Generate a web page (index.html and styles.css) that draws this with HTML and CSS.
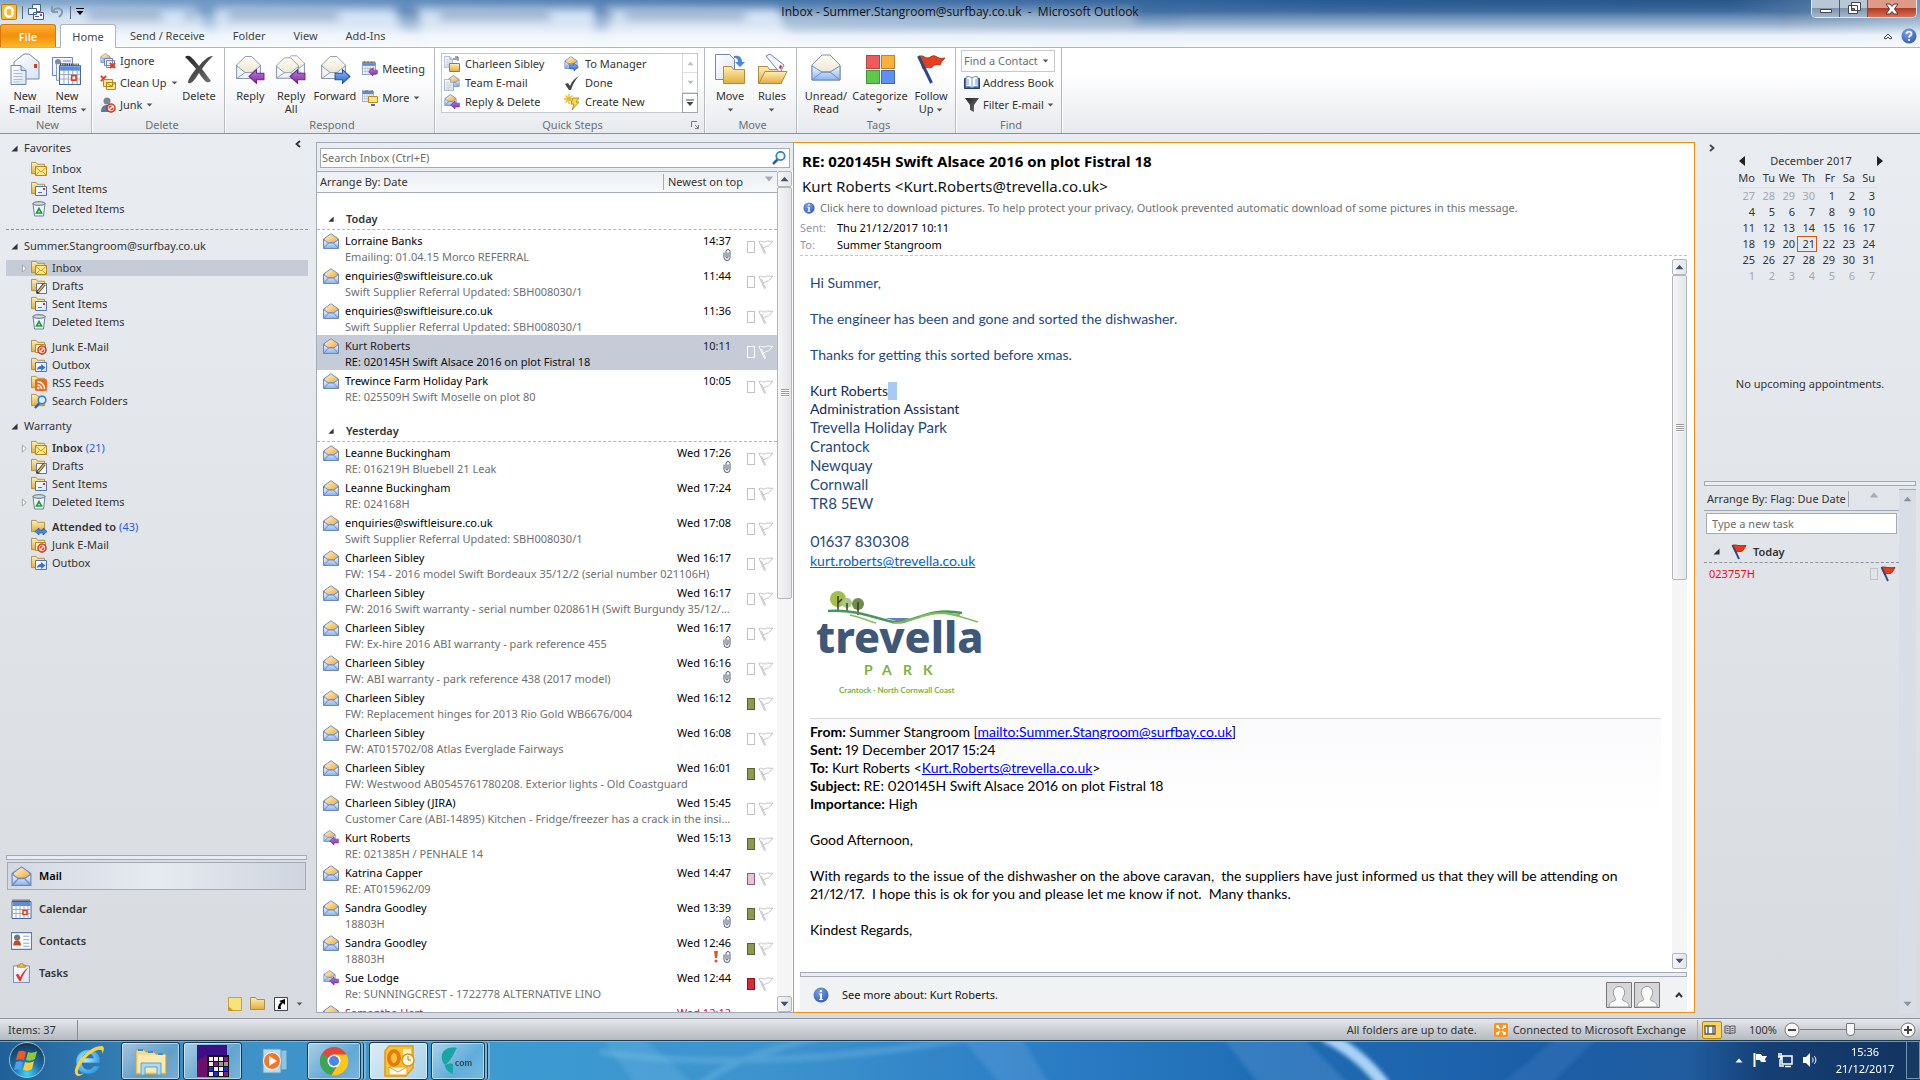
FILE: index.html
```html
<!DOCTYPE html>
<html lang="en">
<head>
<meta charset="utf-8">
<title>Inbox - Summer.Stangroom@surfbay.co.uk - Microsoft Outlook</title>
<link rel="stylesheet" href="styles.css">
</head>
<body>
<svg class="defs" width="0" height="0" aria-hidden="true">
<defs>
<linearGradient id="gPeach" x1="0" y1="0" x2="1" y2="1"><stop offset="0" stop-color="#fff3d0"/><stop offset="1" stop-color="#f6b03c"/></linearGradient>
<linearGradient id="gBlue" x1="0" y1="0" x2="0" y2="1"><stop offset="0" stop-color="#f4f9ff"/><stop offset="1" stop-color="#8db4ee"/></linearGradient>
<linearGradient id="gCream" x1="0" y1="0" x2="0" y2="1"><stop offset="0" stop-color="#fffdf4"/><stop offset="1" stop-color="#e6dfc6"/></linearGradient>
<linearGradient id="gPage" x1="0" y1="0" x2="1" y2="1"><stop offset="0" stop-color="#ffffff"/><stop offset="1" stop-color="#d9e3f3"/></linearGradient>
<linearGradient id="gFold" x1="0" y1="0" x2="0" y2="1"><stop offset="0" stop-color="#fff0b4"/><stop offset="1" stop-color="#e3ac3d"/></linearGradient>
<linearGradient id="gPurple" x1="0" y1="0" x2="0" y2="1"><stop offset="0" stop-color="#c47ae0"/><stop offset="1" stop-color="#7a2f9e"/></linearGradient>
<linearGradient id="gArrow" x1="0" y1="0" x2="0" y2="1"><stop offset="0" stop-color="#8fbcf8"/><stop offset="1" stop-color="#2c66c8"/></linearGradient>
<linearGradient id="gDark" x1="0" y1="0" x2="1" y2="1"><stop offset="0" stop-color="#222"/><stop offset="1" stop-color="#777"/></linearGradient>
<radialGradient id="gInfo" cx=".4" cy=".3" r=".8"><stop offset="0" stop-color="#7fa2e8"/><stop offset="1" stop-color="#2a55b8"/></radialGradient>
<radialGradient id="gOrb" cx=".5" cy=".9" r=".9"><stop offset="0" stop-color="#3fd4ff"/><stop offset=".45" stop-color="#1b6ea6"/><stop offset="1" stop-color="#16324f"/></radialGradient>
<radialGradient id="gIe" cx=".4" cy=".4" r=".7"><stop offset="0" stop-color="#b8ecff"/><stop offset="1" stop-color="#1c8fdc"/></radialGradient>
<linearGradient id="gTask" x1="0" y1="0" x2="1" y2="0"><stop offset="0" stop-color="#1f5f97"/><stop offset=".1" stop-color="#3f8fc4"/><stop offset=".25" stop-color="#3c9bd2"/><stop offset=".4" stop-color="#3d93cd"/><stop offset=".55" stop-color="#2a7cc4"/><stop offset=".66" stop-color="#1f6db5"/><stop offset=".8" stop-color="#1c5ea8"/><stop offset=".88" stop-color="#205c9e"/><stop offset=".92" stop-color="#153f74"/><stop offset="1" stop-color="#12335f"/></linearGradient>
<linearGradient id="gTitle" x1="0" y1="0" x2="1" y2="0"><stop offset="0" stop-color="#7fa4cb"/><stop offset=".2" stop-color="#5f8bbb"/><stop offset=".5" stop-color="#3d6da4"/><stop offset=".7" stop-color="#285a92"/><stop offset=".9" stop-color="#28568a"/><stop offset="1" stop-color="#6f93b8"/></linearGradient>
<linearGradient id="gFade" x1="0" y1="0" x2="0" y2="1"><stop offset="0" stop-color="#fff" stop-opacity="0"/><stop offset=".25" stop-color="#fff" stop-opacity=".08"/><stop offset=".5" stop-color="#e8f0f8" stop-opacity=".5"/><stop offset=".75" stop-color="#f2f7fd" stop-opacity=".95"/><stop offset="1" stop-color="#f7fafd"/></linearGradient>
<filter id="soft" x="-20%" y="-60%" width="140%" height="220%"><feGaussianBlur stdDeviation="5"/></filter>
<filter id="soft2" x="-20%" y="-60%" width="140%" height="220%"><feGaussianBlur stdDeviation="2"/></filter>
</defs>
<symbol id="mail" viewBox="0 0 16 16"><path d="M.5 6 8 .8 15.500 6V15.500H.5z" fill="#7f9fd6" stroke="#7088b8"/><path d="M2 5.500 8 1.200l6 4.300V9H2z" fill="url(#gPeach)"/><path d="M1 7l4.500 3h5L15 7v8H1z" fill="url(#gBlue)"/><path d="M1 15l4.500-5h5L15 15M1 7l4.500 3M15 7l-4.500 3" fill="none" stroke="#6c8cc8"/></symbol>
<symbol id="arrL" viewBox="0 0 16 16"><path d="M1 8 8 1.500V5h7v6H8v3.500z" fill="url(#gPurple)" stroke="#6a2a8c"/></symbol>
<symbol id="arrR" viewBox="0 0 16 16"><path d="M15 8 8 1.500V5H1v6h7v3.500z" fill="url(#gArrow)" stroke="#2452a0"/></symbol>
<symbol id="mailre" viewBox="0 0 16 16"><use href="#mail" width="13" height="12"/><use href="#arrL" x="6" y="6" width="10" height="10"/></symbol>
<symbol id="mailfw" viewBox="0 0 16 16"><use href="#mail" width="14" height="13"/><use href="#arrR" x="5" y="6" width="10" height="10"/></symbol>
<symbol id="fold" viewBox="0 0 16 16"><path d="M.5 1.500h5l1.500 2h7.500v10H.5z" fill="url(#gFold)" stroke="#a98e4e"/></symbol>
<symbol id="fin" viewBox="0 0 16 16"><use href="#fold" width="15" height="15"/><path d="M4.500 5.500h11v9h-11z" fill="#fde98a" stroke="#b58a1c"/><path d="M4.500 6l5.500 5 5.500-5M4.500 14.500l4-4M15.500 14.500l-4-4" fill="none" stroke="#c49a2c"/></symbol>
<symbol id="fsent" viewBox="0 0 16 16"><use href="#fold" width="15" height="15"/><path d="M4.500 5.500h11v9h-11z" fill="url(#gPage)" stroke="#5577ad"/><path d="M12 7h2v2h-2z" fill="#d33"/><path d="M7 11.500h4" stroke="#5577ad"/></symbol>
<symbol id="fdraft" viewBox="0 0 16 16"><use href="#fold" width="15" height="15"/><path d="M5.500 5.500h10v10h-10z" fill="#fff" stroke="#5577ad"/><path d="M6 15l7.500-9" stroke="#333" stroke-width="3"/><path d="M7 14l6.500-8" stroke="#f3b24b" stroke-width="1.500"/></symbol>
<symbol id="bin" viewBox="0 0 16 16"><path d="M2 2.500h12L12.500 15h-9z" fill="#eef4f8" stroke="#6d8296"/><ellipse cx="8" cy="2.500" rx="6" ry="1.800" fill="#cfdbe6" stroke="#5b6f82"/><path d="M8 7.500l2.500 4.500h-5z" fill="none" stroke="#1f9a3a" stroke-width="1.600"/></symbol>
<symbol id="no" viewBox="0 0 16 16"><circle cx="8" cy="8" r="7" fill="#e8401c" stroke="#a82a10"/><path d="M4.500 11.500l7-7" stroke="#fff" stroke-width="2.500"/><circle cx="8" cy="8" r="4.600" fill="none" stroke="#fff" stroke-width="1.200"/></symbol>
<symbol id="fjunk" viewBox="0 0 16 16"><use href="#fold" width="15" height="15"/><path d="M4.500 5.500h10v8h-10z" fill="#f6efcf" stroke="#b58a1c"/><use href="#no" x="6" y="6" width="10" height="10"/></symbol>
<symbol id="fout" viewBox="0 0 16 16"><use href="#fold" width="15" height="15"/><path d="M4.500 5.500h11v9h-11z" fill="url(#gPage)" stroke="#5577ad"/><path d="M6 13c0-3 2-4 4-4V7l4.500 3.500L10 14v-2c-2 0-3 0-4 1z" fill="#3a73d8"/></symbol>
<symbol id="frss" viewBox="0 0 16 16"><use href="#fold" width="15" height="15"/><rect x="4" y="4" width="12" height="12" rx="1.500" fill="#ee6a1e"/><g fill="none" stroke="#fff" stroke-width="1.500"><path d="M6.500 10a4 4 0 0 1 4 4M6.500 6.800a7 7 0 0 1 7 7.200"/></g><circle cx="7.300" cy="13" r="1.200" fill="#fff"/></symbol>
<symbol id="fsearch" viewBox="0 0 16 16"><use href="#fold" width="15" height="15"/><path d="M4 15l4.500-5" stroke="#2a5fb0" stroke-width="2.400"/><circle cx="11" cy="7" r="3.800" fill="#d9efff" stroke="#2f7fd0" stroke-width="1.600"/></symbol>
<symbol id="fatt" viewBox="0 0 16 16"><use href="#fold" width="15" height="15"/><path d="M4 12.500 8 9v2h4V9l4 3.500-4 3.500v-2H8v2z" fill="#4a86e4" stroke="#1f4fa8" stroke-width=".7"/></symbol>
<symbol id="flag" viewBox="0 0 16 16"><path d="M1.500 1.500c3-1.500 5 1 13.500 0l-3.500 5.500c-2.500 1-4 0-7 1.500z" fill="#ea3c1a" stroke="#a92a12"/><path d="M1.500 1l6.500 14" stroke="#2c4a84" stroke-width="1.800"/></symbol>
<symbol id="flago" viewBox="0 0 16 16"><path d="M1 2.500c2-1 3 .5 5 .5s3-1.500 5-1 2 .5 4 0L11.500 6c-1.500 2-2 .5-3.500 1.500S6 9 4.500 9M1 2.500l5.500 12 1-.5L3.500 5" fill="none" stroke="currentColor"/></symbol>
<symbol id="clip" viewBox="0 0 8 12"><path d="M1 3.500v5a3 3 0 0 0 6 0V2.500a1.700 1.700 0 0 0-4 0V8a1 1 0 0 0 2 0V3.500" fill="none" stroke="#4b586e"/></symbol>
<symbol id="tri" viewBox="0 0 8 8"><path d="M7.500.5v7h-7z" fill="#333"/></symbol>
<symbol id="exp" viewBox="0 0 8 10"><path d="M1.500 1l4.500 4-4.500 4z" fill="#fff" stroke="#999"/></symbol>
<symbol id="dn" viewBox="0 0 8 5"><path d="M.5.5h7L4 4.500z" fill="currentColor"/></symbol>
<symbol id="up" viewBox="0 0 8 5"><path d="M.5 4.500h7L4 .5z" fill="currentColor"/></symbol>
<symbol id="glass" viewBox="0 0 16 16"><path d="M2 14l5-5" stroke="#2a5fb0" stroke-width="2.500"/><circle cx="9.500" cy="6" r="4.200" fill="#f3fbff" stroke="#2e86cf" stroke-width="1.800"/></symbol>
<symbol id="info" viewBox="0 0 16 16"><circle cx="8" cy="8" r="7.500" fill="url(#gInfo)"/><path d="M7 3h2v2H7zM6 6.500h3V12h1v1H6v-1h1V7.500H6z" fill="#fff"/></symbol>
<symbol id="env" viewBox="0 0 32 32"><path d="M2 13 12 3h8l10 10v16H2z" fill="url(#gCream)" stroke="#7e8ea8"/><path d="M2 14l10 8h8l10-8v15H2z" fill="#f1f4f9"/><path d="M2 14l10 8M30 14l-10 8M2 29l10-7h8l10 7M2 13v16h28V13" fill="none" stroke="#7e8ea8"/></symbol>
<symbol id="page" viewBox="0 0 16 20"><path d="M.5.5h10l5 5v14H.5z" fill="url(#gPage)" stroke="#6f86ad"/><path d="M10.500.5v5h5" fill="#cddaf0" stroke="#6f86ad"/><path d="M3 8.500h9M3 11.500h9M3 14.500h9M3 17h6M3 5.500h5" stroke="#b2bccd"/></symbol>
<symbol id="cal" viewBox="0 0 20 20"><path d="M.5 2.500h19v17H.5z" fill="#fff" stroke="#4a69a0"/><path d="M1 3h18v4H1z" fill="#5c8ddc"/><path d="M1 1.500h18" stroke="#333" stroke-width="2" stroke-dasharray="1 1"/><path d="M4.500 7v12M8.500 7v12M12.500 7v12M16.500 7v12M1 10.500h18M1 14.500h18" stroke="#9aacc9"/><path d="M11.500 11.500h4v4h-4z" fill="#fff" stroke="#e0401c" stroke-width="1.500"/></symbol>
<symbol id="newmail" viewBox="0 0 32 32"><path d="M5 9 15 1h5l10 8v17H5z" fill="url(#gPage)" stroke="#6f86ad"/><path d="M25 11h3v4h-3z" fill="#d43c1c"/><use href="#page" x="1" y="12" width="17" height="20"/></symbol>
<symbol id="newitems" viewBox="0 0 32 32"><path d="M1.500 4.500h20v18h-20z" fill="url(#gPage)" stroke="#6f86ad"/><circle cx="7" cy="9" r="3" fill="#7a8aa8"/><path d="M12 8h8M12 11h8" stroke="#7a8aa8"/><use href="#page" x="5" y="10" width="14" height="18"/><use href="#cal" x="8" y="10" width="22" height="22"/></symbol>
<symbol id="xbig" viewBox="0 0 32 32"><path d="M2 4c4-3 6-1 14 9C20 8 25 3 30 3c-4 4-8 8-11 13 4 5 6 8 9 12-4 3-6 1-12-8-4 6-6 11-11 10 0-4 4-9 8-14C9 11 6 8 2 4z" fill="url(#gDark)"/></symbol>
<symbol id="reply" viewBox="0 0 32 32"><use href="#env" x="1" y="1" width="27" height="27"/><use href="#arrL" x="14" y="15" width="17" height="17"/></symbol>
<symbol id="replyall" viewBox="0 0 32 32"><use href="#env" x="7" y="0" width="24" height="25"/><use href="#env" x="0" y="2" width="25" height="26"/><use href="#arrL" x="14" y="15" width="17" height="17"/></symbol>
<symbol id="forward" viewBox="0 0 32 32"><use href="#env" x="1" y="1" width="27" height="27"/><use href="#arrR" x="15" y="15" width="17" height="17"/></symbol>
<symbol id="move" viewBox="0 0 32 32"><path d="M1.500 1.500h14l5 5v20h-19z" fill="url(#gPage)" stroke="#6f86ad"/><path d="M20 3c6-1 8 2 8 6h3l-5 5-5-5h3c0-3-1-4-4-4z" fill="#4a86e4"/><path d="M9.500 13.500h8l2 3h11v14h-21z" fill="url(#gFold)" stroke="#b58a3c"/></symbol>
<symbol id="rules" viewBox="0 0 32 32"><path d="M2.500 13.500h9l2 3h12v14h-23z" fill="url(#gFold)" stroke="#b58a3c"/><path d="M10 3l4-2 14 11-4 8z" fill="#f3f6fb" stroke="#6f86ad"/><path d="M24 12l2 1-1 3-2-1z" fill="#d22"/><path d="M3 30.500 9 18.500h22l-6 12z" fill="url(#gFold)" stroke="#b58a3c"/></symbol>
<symbol id="unread" viewBox="0 0 32 32"><path d="M2 12 12 2h8l10 10v15H2z" fill="url(#gCream)" stroke="#7e8ea8"/><path d="M2 13l10 6h8l10-6v14H2z" fill="url(#gBlue)" stroke="#6d8cbc"/><path d="M2 27l10-8h8l10 8" fill="none" stroke="#6d8cbc"/></symbol>
<symbol id="categ" viewBox="0 0 32 32"><path d="M2 2h14v14H2z" fill="#f15a5a"/><path d="M17 2h14v14H17z" fill="#fbb03c"/><path d="M2 17h14v14H2z" fill="#5cc94c"/><path d="M17 17h14v14H17z" fill="#5f8ef4"/><path d="M2.500 2.500h13v13h-13zM17.500 2.500h13v13h-13zM2.500 17.500h13v13h-13zM17.500 17.500h13v13h-13z" fill="none" stroke="#000" stroke-opacity=".25"/></symbol>
<symbol id="bigflag" viewBox="0 0 32 32"><path d="M4 4c3-3 5 1 9 1 3 0 3-3 7-2 4 2 5 3 10 2-3 3-4 4-5 7-5-1-6 0-8 2-3 2-6-1-9 2z" fill="#e8401c" stroke="#b22c10"/><path d="M3.500 3l13 27" stroke="#2c4a84" stroke-width="3"/></symbol>
<symbol id="stack" viewBox="0 0 16 16"><use href="#mail" width="11" height="10"/><path d="M4.500 5.500h8v7h-8zM6.500 7.500h8v7h-8z" fill="#eef2f8" stroke="#7088b8"/></symbol>
<symbol id="redx" viewBox="0 0 8 8"><path d="M1 1l6 6M7 1 1 7" stroke="#e03a1c" stroke-width="2"/></symbol>
<symbol id="ignore" viewBox="0 0 16 16"><use href="#stack" width="16" height="16"/><use href="#redx" x="9" y="9" width="7" height="7"/></symbol>
<symbol id="cleanup" viewBox="0 0 16 16"><use href="#redx" width="7" height="7"/><path d="M3.500 4.500h9v7h-9zM6.500 7.500h9v7h-9z" fill="#fbe58c" stroke="#b58a1c"/><path d="M6.500 7.500 11 11l4.500-3.500" fill="none" stroke="#b58a1c"/></symbol>
<symbol id="junk" viewBox="0 0 16 16"><circle cx="7" cy="4" r="3.500" fill="#7b8593"/><path d="M1 15c0-5 2-7 6-7s6 2 6 7z" fill="#5c78b0"/><use href="#no" x="6" y="6" width="10" height="10"/></symbol>
<symbol id="meeting" viewBox="0 0 16 16"><use href="#cal" width="14" height="14"/><use href="#arrL" x="6" y="6" width="10" height="10"/></symbol>
<symbol id="moreic" viewBox="0 0 16 16"><use href="#cal" width="12" height="12"/><path d="M6.500 6.500h9v6h-9z" fill="#fbe58c" stroke="#b58a1c"/><path d="M9 15h4" stroke="#3a73d8" stroke-width="2"/></symbol>
<symbol id="qmove" viewBox="0 0 16 16"><use href="#page" width="9" height="12"/><path d="M11 1h3v4M9 3h4" stroke="#2c4a84" fill="none"/><path d="M5.500 7.500h10v8h-10z" fill="url(#gFold)" stroke="#a57a1c"/></symbol>
<symbol id="team" viewBox="0 0 16 16"><use href="#mail" x="3" width="13" height="12"/><use href="#page" y="4" width="10" height="12"/></symbol>
<symbol id="check" viewBox="0 0 16 16"><path d="M1 9l3-1 2 3C8 6 11 3 15 1 11 5 9 9 7 15H5z" fill="#444"/></symbol>
<symbol id="bolt" viewBox="0 0 16 16"><path d="M5 0v10M0 5h10M1.500 1.500l7 7M8.500 1.500l-7 7" stroke="#e8b820" stroke-width="1.300"/><path d="M9 4h6l-3 4h3l-7 8 2-6H7z" fill="#ffd84c" stroke="#a97a10" stroke-width=".8"/></symbol>
<symbol id="book" viewBox="0 0 16 16"><path d="M.5 3.500h15v10H.5z" fill="#2f5fae" stroke="#1e4280"/><path d="M2 2c3-1 5 0 6 1 1-1 3-2 6-1v10c-3-1-5 0-6 1-1-1-3-2-6-1z" fill="#fff" stroke="#6f86ad"/><path d="M8 3v10M4 4v6M12 4v6" stroke="#6f9ad8"/></symbol>
<symbol id="funnel" viewBox="0 0 16 16"><path d="M1 1h14l-5 7v7l-4-2V8z" fill="url(#gDark)"/></symbol>
<symbol id="contacts" viewBox="0 0 24 20"><path d="M.5.5h23v19H.5z" fill="#fff" stroke="#5b7cae" stroke-width="1.500"/><circle cx="7" cy="6" r="3.500" fill="#777"/><path d="M2.500 15c0-4 2-6 4.500-6s4.500 2 4.500 6z" fill="#cc4a1e"/><path d="M14 4.500h7M14 8.500h7M14 12.500h7M14 16h7" stroke="#6d98dc"/></symbol>
<symbol id="tasks" viewBox="0 0 20 24"><path d="M.5 3.500h19v20H.5z" fill="url(#gPage)" stroke="#5b7cae"/><path d="M5 5V2.500h3c0-3 4-3 4 0h3V5z" fill="#f2c14e" stroke="#a57a1c"/><path d="M3 14l3-1 2.500 4C11 12 14 8 18 5.500 14 11 11 16 9 22H7.500z" fill="#e5352a"/></symbol>
<symbol id="person" viewBox="0 0 26 26"><path d="M.5.5h25v25H.5z" fill="#d4d6d9" stroke="#777"/><path d="M3 25c0-4 2-5 6-6.500 1-.5.5-2 0-3-3-4-2-11 4-11s7 7 4 11c-.5 1-1 2.500 0 3 4 1.500 6 2.500 6 6.500z" fill="#fafafa" stroke="#999"/></symbol>
</svg>

<div class="app">
<header class="top">
  <svg class="aero" viewBox="0 0 1920 47" preserveAspectRatio="none" aria-hidden="true">
    <rect width="1920" height="47" fill="url(#gTitle)"/>
    <g filter="url(#soft)"><path d="M-10 8h205l20 40H-20zM215 8h180l10 40H215zM415 8h180v40H425zM605 8h175l10 40H610z" fill="#c6daf0"/><path d="M1180 12h600v40h-600z" fill="#3a6a9e"/></g>
    <g filter="url(#soft)" fill="#44648c" opacity=".6"><path d="M88 13h74v8H88zM228 13h110v8H228zM440 13h110v8H440zM625 13h120v8H625z"/><circle cx="190" cy="17" r="5"/><circle cx="414" cy="17" r="6"/><circle cx="608" cy="17" r="6"/></g>
    <path d="M785 8h350v18H785z" fill="#fff" opacity=".3" filter="url(#soft)"/>
    <rect width="1920" height="47" fill="url(#gFade)"/>
  </svg>
  <div class="titlebar">
    <div class="qat">
      <svg width="16" height="16" viewBox="0 0 16 16"><rect x=".5" y=".5" width="15" height="15" rx="1" fill="#f8b92c" stroke="#b8780c"/><rect x="4.500" y="3.500" width="7" height="9" rx="3" fill="none" stroke="#fff" stroke-width="2.400"/></svg>
      <i class="bar"></i>
      <button aria-label="Send/Receive"><svg width="16" height="16" viewBox="0 0 16 16"><path d="M4.500.5h8v7h-8z" fill="#fff" stroke="#44618f"/><path d="M.5 4.500h8v6h-8zM5.500 8.500h10v7h-10z" fill="#f4f8ff" stroke="#44618f"/><path d="M12 10h2v2h-2z" fill="#d33"/><path d="M7 12.500h4" stroke="#44618f"/></svg></button>
      <button aria-label="Undo"><svg width="16" height="16" viewBox="0 0 16 16"><path d="M3 8V2M3 8h6M4 7c4-5 10-2 9 2-.5 2-2 3-3 4" fill="none" stroke="#8a98aa" stroke-width="2"/></svg></button>
      <i class="bar"></i>
      <button aria-label="Customize"><svg width="8" height="8" viewBox="0 0 8 8"><path d="M0 .5h8" stroke="#000"/><path d="M.5 3h7L4 7z"/></svg></button>
    </div>
    <h1>Inbox - Summer.Stangroom@surfbay.co.uk&nbsp; -&nbsp; Microsoft Outlook</h1>
    <div class="winbtns">
      <button aria-label="Minimize"><svg width="14" height="12" viewBox="0 0 14 12"><path d="M1.500 6.500h11v3h-11z" fill="#fff" stroke="#445"/></svg></button>
      <button aria-label="Restore"><svg width="14" height="13" viewBox="0 0 14 13"><path d="M4.500.5h9v8h-9zM1.500 3.500h9v8h-9z" fill="#fff" stroke="#445"/><path d="M4.500 6.500h3v2h-3z" fill="#889" stroke="#445"/></svg></button>
      <button class="x" aria-label="Close"><svg width="14" height="12" viewBox="0 0 14 12"><path d="M1 1h4l2 2.500L9 1h4L9.500 6l3.500 5H9L7 8.500 5 11H1l3.500-5z" fill="#fff" stroke="#533"/></svg></button>
    </div>
  </div>
  <nav class="tabs">
    <button class="file">File</button><button class="on">Home</button><button>Send / Receive</button><button>Folder</button><button>View</button><button>Add-Ins</button>
    <span class="help"><svg width="10" height="8" viewBox="0 0 10 8"><path d="M1 6l4-4 4 4-2 1-2-2-2 2z" fill="#fff" stroke="#444"/></svg>
    <svg width="16" height="16" viewBox="0 0 16 16"><circle cx="8" cy="8" r="7.500" fill="url(#gInfo)"/><path d="M5.500 6c0-3.500 5.500-3 5 0-.3 1.500-2.500 1.500-2.500 3.500M8 11v2" fill="none" stroke="#fff" stroke-width="1.800"/></svg></span>
  </nav>
</header>

<section class="ribbon">
  <div class="group g-new"><div class="tools">
    <button class="big"><svg><use href="#newmail"/></svg><span>New<br>E-mail</span></button>
    <button class="big"><svg><use href="#newitems"/></svg><span>New<br>Items <svg class="dd"><use href="#dn"/></svg></span></button></div><h2>New</h2></div>
  <div class="group g-del"><div class="tools">
    <div class="smalls"><button><svg><use href="#ignore"/></svg>Ignore</button><button><svg><use href="#cleanup"/></svg>Clean Up <svg class="dd"><use href="#dn"/></svg></button><button><svg><use href="#junk"/></svg>Junk <svg class="dd"><use href="#dn"/></svg></button></div>
    <button class="big"><svg><use href="#xbig"/></svg><span>Delete</span></button></div><h2>Delete</h2></div>
  <div class="group g-resp"><div class="tools">
    <button class="big"><svg><use href="#reply"/></svg><span>Reply</span></button>
    <button class="big"><svg><use href="#replyall"/></svg><span>Reply<br>All</span></button>
    <button class="big mid"><svg><use href="#forward"/></svg><span>Forward</span></button>
    <div class="smalls two"><button><svg><use href="#meeting"/></svg>Meeting</button><button><svg><use href="#moreic"/></svg>More <svg class="dd"><use href="#dn"/></svg></button></div></div><h2>Respond</h2></div>
  <div class="group g-quick"><div class="tools"><div class="gallery">
    <div class="steps"><button><svg><use href="#qmove"/></svg>Charleen Sibley</button><button><svg><use href="#mailfw"/></svg>To Manager</button><button><svg><use href="#team"/></svg>Team E-mail</button><button><svg><use href="#check"/></svg>Done</button><button><svg><use href="#mailre"/></svg>Reply &amp; Delete</button><button><svg><use href="#bolt"/></svg>Create New</button></div>
    <div class="spin"><button aria-label="Up"><svg><use href="#up"/></svg></button><button aria-label="Down"><svg><use href="#dn"/></svg></button><button class="live" aria-label="More steps"><svg viewBox="0 0 8 8"><path d="M0 1h8" stroke="#444"/><path d="M.5 3h7L4 7z" fill="#444"/></svg></button></div></div></div>
    <h2>Quick Steps<svg class="launch" width="8" height="8" viewBox="0 0 8 8"><path d="M.5 6V.5H6M4 4l3 3M7.500 4v3.500H4" fill="none" stroke="#777"/></svg></h2></div>
  <div class="group g-move"><div class="tools">
    <button class="big"><svg><use href="#move"/></svg><span>Move<br><svg class="dd"><use href="#dn"/></svg></span></button>
    <button class="big"><svg><use href="#rules"/></svg><span>Rules<br><svg class="dd"><use href="#dn"/></svg></span></button></div><h2>Move</h2></div>
  <div class="group g-tags"><div class="tools">
    <button class="big mid"><svg><use href="#unread"/></svg><span>Unread/<br>Read</span></button>
    <button class="big wide"><svg><use href="#categ"/></svg><span>Categorize<br><svg class="dd"><use href="#dn"/></svg></span></button>
    <button class="big"><svg><use href="#bigflag"/></svg><span>Follow<br>Up <svg class="dd"><use href="#dn"/></svg></span></button></div><h2>Tags</h2></div>
  <div class="group g-find"><div class="tools"><div class="smalls">
    <div class="find"><input type="text" placeholder="Find a Contact" aria-label="Find a Contact"><svg class="dd"><use href="#dn"/></svg></div>
    <button><svg><use href="#book"/></svg>Address Book</button><button><svg><use href="#funnel"/></svg>Filter E-mail <svg class="dd"><use href="#dn"/></svg></button></div></div><h2>Find</h2></div>
</section>

<main class="work">
<aside class="nav">
  <button class="fold" aria-label="Minimize pane"><svg width="6" height="8" viewBox="0 0 6 8"><path d="M5 1 1.500 4 5 7" fill="none" stroke="#333" stroke-width="1.800"/></svg></button>
  <h3><svg><use href="#tri"/></svg>Favorites</h3>
  <ul class="fav"><li><svg><use href="#fin"/></svg>Inbox</li><li><svg><use href="#fsent"/></svg>Sent Items</li><li><svg><use href="#bin"/></svg>Deleted Items</li></ul>
  <hr>
  <h3><svg><use href="#tri"/></svg>Summer.Stangroom@surfbay.co.uk</h3>
  <ul><li class="sel"><svg class="ex"><use href="#exp"/></svg><svg><use href="#fin"/></svg>Inbox</li><li><svg><use href="#fdraft"/></svg>Drafts</li><li><svg><use href="#fsent"/></svg>Sent Items</li><li><svg><use href="#bin"/></svg>Deleted Items</li></ul>
  <ul class="more"><li><svg><use href="#fjunk"/></svg>Junk E-Mail</li><li><svg><use href="#fout"/></svg>Outbox</li><li><svg><use href="#frss"/></svg>RSS Feeds</li><li><svg><use href="#fsearch"/></svg>Search Folders</li></ul>
  <h3><svg><use href="#tri"/></svg>Warranty</h3>
  <ul><li><svg class="ex"><use href="#exp"/></svg><svg><use href="#fin"/></svg><b>Inbox</b><em>(21)</em></li><li><svg><use href="#fdraft"/></svg>Drafts</li><li><svg><use href="#fsent"/></svg>Sent Items</li><li><svg class="ex"><use href="#exp"/></svg><svg><use href="#bin"/></svg>Deleted Items</li></ul>
  <ul class="more"><li><svg><use href="#fatt"/></svg><b>Attended to</b><em>(43)</em></li><li><svg><use href="#fjunk"/></svg>Junk E-Mail</li><li><svg><use href="#fout"/></svg>Outbox</li></ul>
  <div class="modules">
    <div class="split"></div>
    <button class="on"><svg><use href="#mail"/></svg>Mail</button>
    <button><svg><use href="#cal"/></svg>Calendar</button>
    <button><svg><use href="#contacts"/></svg>Contacts</button>
    <button><svg><use href="#tasks"/></svg>Tasks</button>
    <div class="tiny"><svg width="14" height="14" viewBox="0 0 14 14"><path d="M.5.5h13v13H.5z" fill="#f9e27a" stroke="#c9a23a"/><path d="M0 14V9l6 5z" fill="#c9982a"/></svg><svg width="16" height="16"><use href="#fold"/></svg><svg width="14" height="14" viewBox="0 0 14 14"><path d="M.5.5h13v13H.5z" fill="#fff" stroke="#445"/><path d="M4 12c0-4 1-5 3-7L5 4l6-2v6L9 6c-2 2-3 3-2 6z"/></svg><svg class="dd"><use href="#dn"/></svg></div>
  </div>
</aside>

<section class="list">
  <div class="search"><input type="text" placeholder="Search Inbox (Ctrl+E)" aria-label="Search Inbox"><svg width="16" height="16"><use href="#glass"/></svg></div>
  <div class="body">
  <div class="col">
  <div class="arrange"><span>Arrange By: Date</span><span class="newest">Newest on top</span><svg width="10" height="6"><use href="#dn"/></svg></div>
  <div class="msgs">
  <h3><svg><use href="#tri"/></svg>Today</h3>
  <ul>
  <li><svg class="ic"><use href="#mail"/></svg><b>Lorraine Banks</b><time>14:37</time><p>Emailing: 01.04.15 Morco REFERRAL</p><span class="at"><svg><use href="#clip"/></svg></span><span class="fl"><i></i><svg><use href="#flago"/></svg></span></li>
  <li><svg class="ic"><use href="#mail"/></svg><b>enquiries@swiftleisure.co.uk</b><time>11:44</time><p>Swift Supplier Referral Updated: SBH008030/1</p><span class="fl"><i></i><svg><use href="#flago"/></svg></span></li>
  <li><svg class="ic"><use href="#mail"/></svg><b>enquiries@swiftleisure.co.uk</b><time>11:36</time><p>Swift Supplier Referral Updated: SBH008030/1</p><span class="fl"><i></i><svg><use href="#flago"/></svg></span></li>
  <li class="sel"><svg class="ic"><use href="#mail"/></svg><b>Kurt Roberts</b><time>10:11</time><p>RE: 020145H Swift Alsace 2016 on plot Fistral 18</p><span class="fl"><i></i><svg><use href="#flago"/></svg></span></li>
  <li><svg class="ic"><use href="#mail"/></svg><b>Trewince Farm Holiday Park</b><time>10:05</time><p>RE: 025509H Swift Moselle on plot 80</p><span class="fl"><i></i><svg><use href="#flago"/></svg></span></li>
  </ul>
  <h3><svg><use href="#tri"/></svg>Yesterday</h3>
  <ul>
  <li><svg class="ic"><use href="#mail"/></svg><b>Leanne Buckingham</b><time>Wed 17:26</time><p>RE: 016219H Bluebell 21 Leak</p><span class="at"><svg><use href="#clip"/></svg></span><span class="fl"><i></i><svg><use href="#flago"/></svg></span></li>
  <li><svg class="ic"><use href="#mail"/></svg><b>Leanne Buckingham</b><time>Wed 17:24</time><p>RE: 024168H</p><span class="fl"><i></i><svg><use href="#flago"/></svg></span></li>
  <li><svg class="ic"><use href="#mail"/></svg><b>enquiries@swiftleisure.co.uk</b><time>Wed 17:08</time><p>Swift Supplier Referral Updated: SBH008030/1</p><span class="fl"><i></i><svg><use href="#flago"/></svg></span></li>
  <li><svg class="ic"><use href="#mail"/></svg><b>Charleen Sibley</b><time>Wed 16:17</time><p>FW: 154 - 2016 model Swift Bordeaux 35/12/2 (serial number 021106H)</p><span class="fl"><i></i><svg><use href="#flago"/></svg></span></li>
  <li><svg class="ic"><use href="#mail"/></svg><b>Charleen Sibley</b><time>Wed 16:17</time><p>FW: 2016 Swift warranty - serial number 020861H (Swift Burgundy 35/12/...</p><span class="fl"><i></i><svg><use href="#flago"/></svg></span></li>
  <li><svg class="ic"><use href="#mail"/></svg><b>Charleen Sibley</b><time>Wed 16:17</time><p>FW: Ex-hire 2016 ABI warranty - park reference 455</p><span class="at"><svg><use href="#clip"/></svg></span><span class="fl"><i></i><svg><use href="#flago"/></svg></span></li>
  <li><svg class="ic"><use href="#mail"/></svg><b>Charleen Sibley</b><time>Wed 16:16</time><p>FW: ABI warranty - park reference 438 (2017 model)</p><span class="at"><svg><use href="#clip"/></svg></span><span class="fl"><i></i><svg><use href="#flago"/></svg></span></li>
  <li><svg class="ic"><use href="#mail"/></svg><b>Charleen Sibley</b><time>Wed 16:12</time><p>FW: Replacement hinges for 2013 Rio Gold WB6676/004</p><span class="fl"><i class="green"></i><svg><use href="#flago"/></svg></span></li>
  <li><svg class="ic"><use href="#mail"/></svg><b>Charleen Sibley</b><time>Wed 16:08</time><p>FW: AT015702/08 Atlas Everglade Fairways</p><span class="fl"><i></i><svg><use href="#flago"/></svg></span></li>
  <li><svg class="ic"><use href="#mail"/></svg><b>Charleen Sibley</b><time>Wed 16:01</time><p>FW: Westwood AB0545761780208. Exterior lights - Old Coastguard</p><span class="fl"><i class="green"></i><svg><use href="#flago"/></svg></span></li>
  <li><svg class="ic"><use href="#mail"/></svg><b>Charleen Sibley (JIRA)</b><time>Wed 15:45</time><p>Customer Care (ABI-14895) Kitchen - Fridge/freezer has a crack in the insi...</p><span class="fl"><i></i><svg><use href="#flago"/></svg></span></li>
  <li><svg class="ic"><use href="#mailre"/></svg><b>Kurt Roberts</b><time>Wed 15:13</time><p>RE: 021385H / PENHALE 14</p><span class="fl"><i class="green"></i><svg><use href="#flago"/></svg></span></li>
  <li><svg class="ic"><use href="#mail"/></svg><b>Katrina Capper</b><time>Wed 14:47</time><p>RE: AT015962/09</p><span class="fl"><i class="pink"></i><svg><use href="#flago"/></svg></span></li>
  <li><svg class="ic"><use href="#mail"/></svg><b>Sandra Goodley</b><time>Wed 13:39</time><p>18803H</p><span class="at"><svg><use href="#clip"/></svg></span><span class="fl"><i class="green"></i><svg><use href="#flago"/></svg></span></li>
  <li><svg class="ic"><use href="#mail"/></svg><b>Sandra Goodley</b><time>Wed 12:46</time><p>18803H</p><span class="at"><svg viewBox="0 0 8 12"><path d="M2 0h4L5 7H3z" fill="#e8502a"/><circle cx="4" cy="10" r="1.500" fill="#e8502a"/></svg><svg><use href="#clip"/></svg></span><span class="fl"><i class="green"></i><svg><use href="#flago"/></svg></span></li>
  <li><svg class="ic"><use href="#mailre"/></svg><b>Sue Lodge</b><time>Wed 12:44</time><p>Re: SUNNINGCREST - 1722778 ALTERNATIVE LINO</p><span class="fl"><i class="red"></i><svg><use href="#flago"/></svg></span></li>
  <li class="late"><svg class="ic"><use href="#mail"/></svg><b>Samantha Hart</b><time>Wed 12:12</time><p></p></li>
  </ul>
  </div></div>
  <div class="sb"><button aria-label="Scroll up"><svg><use href="#up"/></svg></button><div class="thumb t1"></div><div class="rest"></div><button aria-label="Scroll down"><svg><use href="#dn"/></svg></button></div>
  </div>
</section>

<article class="read">
  <header>
    <h2>RE: 020145H Swift Alsace 2016 on plot Fistral 18</h2>
    <p class="from">Kurt Roberts &lt;Kurt.Roberts@trevella.co.uk&gt;</p>
    <p class="note"><svg width="12" height="12"><use href="#info"/></svg>Click here to download pictures. To help protect your privacy, Outlook prevented automatic download of some pictures in this message.</p>
    <dl><dt>Sent:</dt><dd>Thu 21/12/2017 10:11</dd><dt>To:</dt><dd>Summer Stangroom</dd></dl>
  </header>
  <div class="view">
    <div class="text">
      <div class="blue"><p>Hi Summer,</p><p>The engineer has been and gone and sorted the dishwasher.</p><p>Thanks for getting this sorted before xmas.</p>
      <div class="navy">Kurt Roberts<mark></mark><br>Administration Assistant</div>
      <address>Trevella Holiday Park<br>Crantock<br>Newquay<br>Cornwall<br>TR8 5EW<br><br>01637 830308<br><a href="mailto:kurt.roberts@trevella.co.uk">kurt.roberts@trevella.co.uk</a></address></div>
      <svg class="logo" width="176" height="115" viewBox="0 0 176 115" role="img" aria-label="Trevella Park">
        <circle cx="28" cy="11" r="8" fill="#a5bf4a"/><circle cx="37" cy="15" r="5" fill="#a9c98c"/><circle cx="48" cy="16" r="6" fill="#6d8b4a"/><path d="M28 24V8M28 15l4-4M37 23v-8M48 27V14" stroke="#3b3a24" stroke-width="1.500"/>
        <path d="M75 30h25l-10 4z" fill="#6c7fb4"/><path d="M18 23c30-2 48 8 66 11s32-16 68-9" fill="none" stroke="#43985c" stroke-width="2.500"/><path d="M82 35c22 0 35-15 68-8M40 27c14 3 18 6 26 8M108 30c18-10 36-3 60 4" fill="none" stroke="#86bd5a" stroke-width="1.500"/>
        <text x="6" y="65" class="lg1">trevella</text><text x="54 72 93 113" y="87" class="lg2">PARK</text><text x="29" y="105" class="lg3">Crantock · North Cornwall Coast</text>
      </svg>
      <div class="quoted"><b>From:</b> Summer Stangroom [<a href="mailto:Summer.Stangroom@surfbay.co.uk">mailto:Summer.Stangroom@surfbay.co.uk</a>]<br><b>Sent:</b> 19 December 2017 15:24<br><b>To:</b> Kurt Roberts &lt;<a href="mailto:Kurt.Roberts@trevella.co.uk">Kurt.Roberts@trevella.co.uk</a>&gt;<br><b>Subject:</b> RE: 020145H Swift Alsace 2016 on plot Fistral 18<br><b>Importance:</b> High
      <p>Good Afternoon,</p><p>With regards to the issue of the dishwasher on the above caravan,&nbsp; the suppliers have just informed us that they will be attending on<br>21/12/17.&nbsp; I hope this is ok for you and please let me know if not.&nbsp; Many thanks.</p><p>Kindest Regards,</p></div>
    </div>
    <div class="sb"><button aria-label="Scroll up"><svg><use href="#up"/></svg></button><div class="thumb t2"></div><div class="rest"></div><button aria-label="Scroll down"><svg><use href="#dn"/></svg></button></div>
  </div>
  <footer><div class="split"></div><div class="people"><svg width="16" height="16"><use href="#info"/></svg><span>See more about: Kurt Roberts.</span><svg class="face" width="26" height="26"><use href="#person"/></svg><svg width="26" height="26"><use href="#person"/></svg><svg class="caret" width="8" height="6" viewBox="0 0 8 6"><path d="M1 5l3-3.500L7 5" fill="none" stroke="#333" stroke-width="2"/></svg></div></footer>
</article>

<aside class="todo">
  <button class="fold" aria-label="Minimize pane"><svg width="6" height="8" viewBox="0 0 6 8"><path d="M1 1l3.500 3L1 7" fill="none" stroke="#444" stroke-width="1.800"/></svg></button>
  <div class="month"><svg width="6" height="10" viewBox="0 0 6 10"><path d="M6 0v10L0 5z" fill="#222"/></svg><span>December 2017</span><svg width="6" height="10" viewBox="0 0 6 10"><path d="M0 0v10l6-5z" fill="#222"/></svg></div>
  <table>
  <thead><tr><th>Mo</th><th>Tu</th><th>We</th><th>Th</th><th>Fr</th><th>Sa</th><th>Su</th></tr></thead>
  <tbody>
  <tr><td class="o">27</td><td class="o">28</td><td class="o">29</td><td class="o">30</td><td>1</td><td>2</td><td>3</td></tr>
  <tr><td>4</td><td>5</td><td>6</td><td>7</td><td>8</td><td>9</td><td>10</td></tr>
  <tr><td>11</td><td>12</td><td>13</td><td>14</td><td>15</td><td>16</td><td>17</td></tr>
  <tr><td>18</td><td>19</td><td>20</td><td class="now">21</td><td>22</td><td>23</td><td>24</td></tr>
  <tr><td>25</td><td>26</td><td>27</td><td>28</td><td>29</td><td>30</td><td>31</td></tr>
  <tr class="o"><td>1</td><td>2</td><td>3</td><td>4</td><td>5</td><td>6</td><td>7</td></tr>
  </tbody></table>
  <p class="none">No upcoming appointments.</p>
  <div class="split"></div>
  <div class="taskpane"><div class="tcol">
    <div class="thead"><span>Arrange By: Flag: Due Date</span><svg width="10" height="6"><use href="#up"/></svg></div>
    <input type="text" placeholder="Type a new task" aria-label="Type a new task">
    <h3><svg class="t"><use href="#tri"/></svg><svg width="16" height="16"><use href="#flag"/></svg>Today</h3>
    <div class="task"><span>023757H</span><i></i><svg width="16" height="16"><use href="#flag"/></svg></div>
  </div><div class="ghost"><svg><use href="#up"/></svg><svg><use href="#dn"/></svg></div></div>
</aside>
</main>

<footer class="status">
  <span class="items">Items: 37</span>
  <span class="sync">All folders are up to date.</span>
  <svg width="14" height="14" viewBox="0 0 14 14"><rect width="14" height="14" rx="2" fill="#f7941d"/><path d="M3 3l3 3M11 3 8 6M3 11l3-3M11 11 8 8M3 5V3h2M9 3h2v2M3 9v2h2M9 11h2V9" fill="none" stroke="#fff" stroke-width="1.500"/></svg>
  <span class="conn">Connected to Microsoft Exchange</span>
  <button class="vw on" aria-label="Normal"><svg width="12" height="10" viewBox="0 0 12 10"><path d="M1 1h10v8H1zM4 1v8M9 1v8" fill="#fff" stroke="#555" stroke-width="1.300"/></svg></button>
  <button class="vw" aria-label="Reading"><svg width="12" height="10" viewBox="0 0 12 10"><path d="M1 1h4l1 1 1-1h4v7H7L6 9 5 8H1zM6 2v7M2.500 3.500h2M2.500 5.500h2M7.500 3.500h2M7.500 5.500h2" fill="none" stroke="#555"/></svg></button>
  <label for="zoom">100%</label>
  <svg width="16" height="16" viewBox="0 0 16 16"><circle cx="8" cy="8" r="7" fill="#f7f7f8" stroke="#777"/><path d="M4 8h8" stroke="#444" stroke-width="2"/></svg>
  <input id="zoom" type="range" min="0" max="100" value="50">
  <svg width="16" height="16" viewBox="0 0 16 16"><circle cx="8" cy="8" r="7" fill="#f7f7f8" stroke="#777"/><path d="M4 8h8M8 4v8" stroke="#444" stroke-width="2"/></svg>
</footer>

<footer class="taskbar">
  <svg class="aero" viewBox="0 0 1920 40" preserveAspectRatio="none" aria-hidden="true"><rect width="1920" height="40" fill="url(#gTask)"/><g filter="url(#soft2)"><path d="M1325-4c25 12 45 30 60 50" stroke="#a9d2f6" stroke-width="12" fill="none"/><path d="M600-5l35 50h60L640-5z" fill="#7cc0e6" opacity=".25"/><path d="M700 45c30-25 80-40 150-55M600 12c100 15 250 10 400-20" stroke="#8fd0f4" stroke-width="7" fill="none" opacity=".25"/><path d="M960-5l40 50h50l-30-50zM1220-5l40 50h90l-50-50z" fill="#8fc0ea" opacity=".2"/><path d="M1500 45l60-50h40l-50 50z" fill="#4a86c8" opacity=".3"/></g><path d="M0 .5h1920" stroke="#1b3d55"/><path d="M0 1.500h1920" stroke="#8fc4e0" stroke-opacity=".7"/></svg>
  <button class="start" aria-label="Start"><svg width="38" height="38" viewBox="0 0 38 38"><circle cx="19" cy="19" r="17.500" fill="url(#gOrb)" stroke="#9fc0d4"/><path d="M10 11c3-2 5-1 8 0l-2 8c-3-1-5-1-8 0z" fill="#f0582a"/><path d="M20 11c3 1 6 1 9-1l-2 8c-3 2-6 2-9 1z" fill="#8fc93a"/><path d="M8 21c3-1 5-1 7 0l-2 8c-2-1-4-1-7 0z" fill="#4aa3e8"/><path d="M17 21c3 1 6 1 9-1l-2 8c-3 2-6 2-9 1z" fill="#fbcb3c"/></svg></button>
  <button class="tb flat" aria-label="Internet Explorer"><svg width="32" height="34" viewBox="0 0 32 34"><path d="M27 19H9c0 7 9 9 12 3h6c-4 12-24 11-24-4S25 1 27 15zM9.500 14h11c-1-6-10-6-11 0z" fill="url(#gIe)" stroke="#1f7fc4" stroke-width=".6"/><path d="M3 31C-3 24 16 1 29 2c3 1 2 5 0 8 1-4-1-5-4-4C16 8 4 22 5 29c1 2 4 1 6 0-3 3-6 4-8 2z" fill="#fbd23c"/></svg></button>
  <button class="tb" aria-label="Explorer"><svg width="34" height="30" viewBox="0 0 34 30"><path d="M2 4h8l2 2h8l2 2h10v20H2z" fill="#f6dc8a" stroke="#c9a040"/><path d="M4 9h27v17H4z" fill="#fbeab0"/><path d="M4 4h5M14 6h5M24 8h5" stroke="#3a8fd0" stroke-width="2"/><path d="M7 29V17h20v12h-4v-8H11v8z" fill="#a9daf2" stroke="#5aa3cc"/></svg></button>
  <button class="tb" aria-label="Application"><svg width="32" height="32" viewBox="0 0 32 32"><path d="M0 0h30v12H10v20H0z" fill="#3c0f88"/><path d="M0 16l10-6v22H0z" fill="#6c106c"/><path d="M10 10h22v22H10z" fill="#111"/><g fill="#eee"><path d="M12 12h4v4h-4zM17 12h4v4h-4zM22 12h4v4h-4zM12 17h4v4h-4zM22 22h4v4h-4zM17 22h4v4h-4zM12 27h4v4h-4zM22 27h4v4h-4z"/></g><path d="M27 12h4v4h-4zM17 17h4v4h-4zM27 27h4v4h-4z" fill="#8c1c7c"/><path d="M12 22h4v4h-4zM27 22h4v4h-4zM17 27h4v4h-4z" fill="#1c2ce0"/><path d="M22 17h4v4h-4zM27 17h4v4h-4z" fill="#999"/></svg></button>
  <button class="tb flat" aria-label="Media Player"><svg width="28" height="26" viewBox="0 0 28 26"><path d="M8 2h18v20H8z" fill="#8cc4e4" stroke="#4a8ab4"/><path d="M2 1h18v24H2z" fill="#b9dcf0" stroke="#5a9ac4"/><circle cx="11" cy="13" r="8.500" fill="#f0782a" stroke="#fff"/><path d="M8 8l8 5-8 5z" fill="#fff"/></svg></button>
  <button class="tb stacked" aria-label="Chrome"><svg width="30" height="30" viewBox="0 0 30 30"><circle cx="15" cy="15" r="14" fill="#e5453a"/><path d="M15 15 3 8a14 14 0 0 0 9 21l7-12z" fill="#3aa757"/><path d="M15 8.500h12.500A14 14 0 0 1 12.500 29L20 17z" fill="#fbc818"/><circle cx="15" cy="15" r="6.500" fill="#fff"/><circle cx="15" cy="15" r="5" fill="#4a86ee"/></svg></button>
  <button class="tb lit" aria-label="Outlook"><svg width="32" height="32" viewBox="0 0 32 32"><path d="M6 1h24v22l-7 8H2V6z" fill="#fbc23a" stroke="#e09a14" stroke-width="1.500"/><path d="M20 4h8v8h-8z" fill="#fff3cc"/><ellipse cx="11" cy="13" rx="5" ry="7" fill="none" stroke="#e07f10" stroke-width="4"/><circle cx="25" cy="15" r="6" fill="#fff6da" stroke="#d8941c" stroke-width="1.500"/><path d="M25 11v4h3" fill="none" stroke="#b8780c"/><path d="M6 22h18v8H6z" fill="#fffaf0" stroke="#e8a21c"/><path d="M6 22l9 5 9-5" fill="none" stroke="#e8a21c"/></svg></button>
  <button class="tb stacked" aria-label="8com"><svg width="34" height="30" viewBox="0 0 34 30"><path d="M16 2C1-1-3 12 4 19c5-3 8-10 12-17z" fill="#1aa5a5"/><path d="M4 19c3-1 6-2 8-1v10c-5-2-8-5-8-9z" fill="#1aa5a5"/><text x="14" y="20" class="com">com</text></svg></button>
  <div class="tray"><svg width="8" height="5"><use href="#up"/></svg>
  <svg width="16" height="16" viewBox="0 0 16 16"><path d="M2.500 1v14" stroke="#fff" stroke-width="2"/><path d="M4 2h5l1 2h5l-2 3 1 3H9L8 8H4z" fill="#fff"/></svg>
  <svg width="16" height="16" viewBox="0 0 16 16"><path d="M5 4h10v8H5zM8 14.500h6M2 1v4M4 1v4M1 5h4l-2 3v6h4" fill="none" stroke="#fff" stroke-width="1.500"/></svg>
  <svg width="16" height="16" viewBox="0 0 16 16"><path d="M1 5h3l4-4v14l-4-4H1z" fill="#fff"/><path d="M10 5.500c1.500 1.500 1.500 3.500 0 5M12 4c2.500 2 2.500 6 0 8" fill="none" stroke="#fff"/></svg>
  <div class="clock">15:36<br>21/12/2017</div></div>
  <button class="desk" aria-label="Show desktop"></button>
</footer>
</div>
</body>
</html>
```

FILE: styles.css
```css
* { box-sizing: border-box; }
body { margin: 0; font: 11px/16px "Noto Sans", "Open Sans", sans-serif; color: #333; }
h1, h2, h3, p, ul, dl, dd { margin: 0; padding: 0; font-size: inherit; font-weight: normal; }
ul { list-style: none; }
button { font: inherit; color: inherit; background: none; border: 0; padding: 0; margin: 0; }
input { font: inherit; border-radius: 0; }
svg { display: block; flex: none; }
.defs { position: absolute; }
.app { height: 100vh; display: flex; flex-direction: column; overflow: hidden; }
.aero { position: absolute; inset: 0; width: 100%; height: 100%; z-index: -1; }
.dd { display: inline-block; width: 7px; height: 4px; color: #555; vertical-align: middle; }

/* title bar and tabs */
.top { position: relative; z-index: 0; flex: none; border-bottom: 1px solid #b1b5bb; }
.titlebar { display: grid; grid-template-columns: 1fr auto 1fr; height: 24px; }
.titlebar h1 { font: 12px/24px "Open Sans", sans-serif; color: #111; }
.qat { display: flex; align-items: center; gap: 5px; padding-left: 1px; }
.qat .bar { width: 1px; height: 13px; background: #5f6c7c; }
.winbtns { display: flex; justify-self: end; height: 18px; margin-right: 3px; border: 1px solid #e4ecf4; border-top: 0; border-radius: 0 0 5px 5px; overflow: hidden; }
.winbtns button { width: 28px; display: grid; place-items: center; background: linear-gradient(#b8c6d6 45%, #7f94ac 50%, #a5b8cc); border-right: 1px solid #4a5a70; }
.winbtns .x { width: 48px; border: 0; background: linear-gradient(#dd9a88 45%, #b53a20 50%, #d8705a); }
.tabs { display: flex; height: 23px; line-height: 23px; }
.tabs button { padding: 0 14px; color: #444; }
.tabs .file { width: 56px; margin-right: 4px; color: #fff; font-weight: 600; background: linear-gradient(#fbb034, #f58e0b 50%, #fcb92c); border: 1px solid #d8760c; border-bottom: 0; border-radius: 3px 3px 0 0; }
.tabs .on { width: 56px; padding: 0; margin-bottom: -1px; background: #fff; border: 1px solid #b1b5bb; border-bottom: 0; border-radius: 3px 3px 0 0; }
.help { margin-left: auto; display: flex; align-items: center; gap: 8px; padding-right: 3px; }

/* ribbon */
.ribbon { flex: none; display: flex; height: 86px; background: linear-gradient(#fff 30%, #e6e9ed); border-bottom: 1px solid #8b9097; }
.group { display: flex; flex-direction: column; border-right: 1px solid #b5bac1; box-shadow: 1px 0 #fff; }
.group .tools { display: flex; flex: 1; }
.group h2 { position: relative; height: 17px; line-height: 17px; text-align: center; color: #6a7078; }
.launch { position: absolute; right: 5px; top: 5px; }
.g-new { width: 92px; padding-left: 4px; } .g-del { width: 133px; padding-left: 8px; } .g-resp { width: 210px; padding-left: 5px; } .g-quick { width: 270px; padding-left: 6px; } .g-move { width: 92px; padding-left: 4px; } .g-tags { width: 159px; padding-left: 5px; } .g-find { width: 106px; padding-left: 5px; }
.group .tools, .group h2 { margin-right: 0; }
.big { width: 42px; padding-top: 5px; display: flex; flex-direction: column; align-items: center; white-space: nowrap; }
.big.mid { width: 48px; } .big.wide { width: 60px; }
.big > svg { width: 32px; height: 32px; }
.big span { margin-top: 4px; line-height: 13px; }
.smalls { display: flex; flex-direction: column; padding-top: 2px; width: 78px; }
.smalls button { display: flex; align-items: center; gap: 4px; height: 22px; white-space: nowrap; }
.smalls button > svg:first-child, .steps svg { width: 16px; height: 16px; }
.smalls.two { padding: 10px 0 0 4px; gap: 7px; }
.gallery { display: flex; width: 257px; height: 60px; margin-top: 5px; border: 1px solid #c3c8ce; background: #fff; }
.steps { flex: 1; display: grid; grid-template-columns: 120px 1fr; }
.steps button { display: flex; align-items: center; gap: 5px; padding-left: 2px; }
.spin { display: flex; flex-direction: column; width: 15px; border-left: 1px solid #d5d8dc; }
.spin button { flex: 1; display: grid; place-items: center; color: #bbb; border-bottom: 1px solid #dcdfe3; }
.spin .live { border: 1px solid #9fa5ac; margin: 0 -1px -1px; }
.spin svg { width: 7px; height: 5px; } .spin .live svg { width: 8px; height: 8px; }
.find { display: flex; align-items: center; width: 94px; height: 22px; padding-right: 5px; border: 1px solid #c6cacf; background: #fff; }
.find input { min-width: 0; flex: 1; border: 0; padding: 0 0 0 2px; background: none; }
input::placeholder { color: #6d6d6d; opacity: 1; }
.g-find .smalls { width: 96px; }
.g-find button { padding-left: 3px; gap: 3px; }

/* workspace */
.work { flex: 1; min-height: 0; display: flex; background: linear-gradient(#e9edf2, #d7dade); }
.split { height: 5px; border: 1px solid #a6abb3; background: #e9ecf0; }
.nav { position: relative; flex: none; width: 308px; margin-right: 8px; padding: 5px 0 0 6px; display: flex; flex-direction: column; }
.nav .fold { position: absolute; top: 6px; right: 7px; }
.nav h3 { display: flex; align-items: center; gap: 6px; height: 18px; padding-left: 5px; }
.nav h3 svg { width: 7px; height: 7px; }
.nav ul + h3 { margin-top: 7px; }
.nav ul { margin-top: 4px; }
.nav ul.more { margin-top: 7px; }
.nav ul.fav { margin-top: 2px; }
.nav li { position: relative; display: flex; align-items: center; gap: 5px; height: 18px; padding-left: 25px; background-clip: padding-box; border: solid transparent; border-width: 1px 0; }
.nav .fav li { height: 20px; }
.nav li svg { width: 16px; height: 16px; }
.nav li svg.ex { position: absolute; left: 15px; width: 7px; height: 9px; }
.nav li b { font-weight: 600; } .nav li em { font-style: normal; color: #1f5fd8; margin-left: -2px; }
.nav .sel { background-color: #c5ccd8; }
.nav hr { width: 100%; border: 0; border-top: 1px dashed #8d949c; margin: 10px 0 7px; }
.modules { margin: auto 1px 0 0; display: flex; flex-direction: column; }
.modules button { display: flex; align-items: center; gap: 7px; height: 32px; padding-left: 5px; font-weight: 600; }
.modules button svg { width: 21px; height: 20px; }
.modules .on { height: 28px; margin: 2px 1px 3px; padding-left: 3px; color: #000; border: 1px solid #a3abb8; background: linear-gradient(90deg, #d3d9e2, #e6ebf1, #cfd5de); }
.tiny { height: 29px; display: flex; justify-content: flex-end; align-items: center; gap: 8px; padding-right: 4px; }

/* message list */
.list { flex: none; width: 477px; margin: 8px 0 5px; display: flex; flex-direction: column; border: solid #a3abb8; border-width: 1px 0 1px 1px; }
.search { display: flex; align-items: center; height: 20px; margin: 5px 3px 3px; padding-right: 2px; border: 1px solid #a3abb8; background: #fff; }
.search input { flex: 1; border: 0; padding: 0 0 0 1px; background: none; }
.list .body { flex: 1; min-height: 0; display: flex; background: #fff; }
.col { flex: 1; min-width: 0; display: flex; flex-direction: column; }
.arrange { display: flex; align-items: center; height: 22px; padding: 0 3px; border: solid #a3abb8; border-width: 1px 0; background: linear-gradient(#eceff4, #f6f8fa); }
.arrange span:first-child { flex: 1; }
.newest { width: 101px; border-left: 1px solid #a3abb8; padding-left: 4px; }
.arrange svg { color: #a3abb8; margin-bottom: 6px; }
.msgs { flex: 1; min-height: 0; overflow: hidden; }
.msgs h3 { display: flex; align-items: center; gap: 12px; height: 37px; padding: 15px 0 0 11px; font-weight: 600; border-bottom: 1px dashed #b4b4b4; }
.msgs h3 svg { width: 6px; height: 6px; }
.msgs li { display: grid; grid-template-columns: 28px 1fr auto 46px; grid-template-rows: 16px 16px; height: 35px; padding-top: 3px; color: #000; white-space: nowrap; }
.msgs b { font-weight: normal; }
.msgs time { grid-column: 3; }
.msgs p { grid-area: 2 / 2 / 3 / 4; color: #707070; }
.msgs .ic { grid-row: 1 / 3; width: 16px; height: 16px; margin: 0 0 0 6px; }
.msgs .at { grid-area: 2 / 3; display: flex; justify-content: flex-end; gap: 3px; }
.msgs .at svg { width: 8px; height: 12px; }
.msgs .fl { grid-area: 1 / 4 / 3 / 5; display: flex; align-items: center; gap: 3px; padding: 0 0 4px 16px; color: #c2c2c2; }
.fl i, .task i { width: 8px; height: 12px; border: 1px solid #c2c2c2; }
.fl svg { width: 16px; height: 16px; }
.fl .green { background: #8a9a50; border-color: #56632c; } .fl .pink { background: #e6c3d6; border-color: #94587a; } .fl .red { background: #d8283a; border-color: #8c1420; }
.msgs .sel { background: #c5ccd8; color: #222; } .msgs .sel p { color: #111; } .msgs .sel .fl { color: #fff; } .sel .fl i { border-color: #fff; }
.msgs .late { color: #d11; }
.sb { flex: none; width: 15px; display: flex; flex-direction: column; background: #f5f5f6; }
.list .sb { margin-right: 1px; }
.sb button, .thumb { border: 1px solid #b3b6bb; border-radius: 2px; background: linear-gradient(90deg, #f6f6f7, #e4e5e7); }
.sb button { flex: none; height: 16px; display: grid; place-items: center; color: #44507a; }
.sb button svg { width: 9px; height: 6px; }
.thumb { display: grid; place-items: center; }
.thumb::after { content: ""; width: 8px; height: 8px; background: repeating-linear-gradient(#999 0 1px, #fff 1px 2px); }
.t1 { flex: 0 0 49%; } .t2 { flex: 0 0 43%; } .rest { flex: 1; }

/* reading pane */
.read { flex: 1; min-width: 0; margin: 8px 0 5px; display: flex; flex-direction: column; background: #fff; border: 1px solid #e8920e; }
.read > header { flex: none; margin: 0 7px 0 6px; padding: 8px 0 2px 2px; border-bottom: 1px dashed #c4c4c4; }
.read h2 { font-size: 15px; line-height: 20px; font-weight: 700; color: #000; }
.from { margin-top: 5px; font-size: 15px; line-height: 20px; color: #111; }
.note { display: flex; align-items: center; gap: 5px; margin-top: 4px; padding-left: 1px; color: #707070; }
.read dl { display: grid; grid-template-columns: 37px 1fr; margin: 3px 0 0 -2px; line-height: 17px; }
.read dt { color: #9a96ac; } .read dd { color: #000; }
.view { flex: 1; min-height: 0; display: flex; padding: 3px 7px 3px 16px; }
.text { flex: 1; min-width: 0; padding: 15px 11px 0 0; font: 14px/18px Lato, sans-serif; font-variant-numeric: proportional-nums; color: #000; overflow: hidden; }
.text p { margin-bottom: 18px; }
.blue { color: #1f497d; } .navy { color: #0f2a5c; }
.text mark { display: inline-block; width: 9px; height: 18px; vertical-align: top; background: #a9caf0; }
.text address { font-size: 15px; line-height: 19px; font-style: normal; }
.text address a { font-size: 14px; color: #0563c1; }
.logo { margin: 18px 0 15px; }
.lg1 { font: 800 43px "Noto Sans", sans-serif; fill: #3f5878; } .lg2 { font: 700 14px Lato, sans-serif; fill: #7db23c; } .lg3 { font: 700 8px Lato, sans-serif; fill: #7db23c; }
.quoted { border-top: 1px solid #d5d7da; padding-top: 4px; background: linear-gradient(#fafafc, #fff 100px); }
.quoted a { color: #00f; }
.quoted p { margin: 18px 0 0; }
.read > footer { flex: none; margin: 0 7px 0 6px; }
.people { display: flex; align-items: center; height: 35px; padding-left: 13px; background: #f1f2f4; color: #111; }
.people span { margin-left: 13px; } .people .face { margin: 0 2px 0 auto; } .caret { margin: 0 4px 0 15px; }

/* to-do bar */
.todo { position: relative; flex: none; width: 225px; padding: 18px 4px 5px 9px; display: flex; flex-direction: column; }
.todo .fold { position: absolute; left: 14px; top: 10px; }
.month { display: flex; justify-content: space-between; align-items: center; width: 144px; margin: 1px 0 0 35px; }
.todo table { width: 140px; margin: 0 0 0 33px; border-collapse: collapse; table-layout: fixed; text-align: right; line-height: 16px; }
.todo th { font-weight: normal; padding: 0 2px 0 0; height: 18px; border-bottom: 1px solid #dde0e4; }
.todo td { padding: 0 2px 0 0; height: 16px; }
.todo .o, .todo .o td { color: #a3a7ad; }
.now { outline: 1px solid #cc5a12; outline-offset: -1px; }
.none { margin: 92px 0 89px; text-align: center; }
.taskpane { flex: 1; display: flex; margin-top: 3px; min-height: 0; }
.tcol { flex: 1; min-width: 0; }
.thead { display: flex; align-items: center; height: 22px; padding-left: 3px; border-bottom: 1px solid #a3abb8; white-space: nowrap; }
.thead span { padding-right: 2px; border-right: 1px solid #a3abb8; }
.thead svg { margin: 0 auto 8px; color: #a3abb8; }
.tcol input { display: block; width: 191px; height: 21px; margin: 2px 0 0 2px; padding: 0 5px; border: 1px solid #a3abb8; }
.tcol h3 { display: flex; align-items: center; gap: 6px; height: 29px; padding: 8px 0 0 9px; font-weight: 600; border-bottom: 1px dashed #8d949c; }
.tcol .t { width: 7px; height: 7px; margin-right: 5px; }
.task { display: flex; align-items: center; gap: 2px; height: 22px; padding: 0 3px 0 5px; color: #e0101c; }
.task i { margin-left: auto; }
.ghost { width: 17px; display: flex; flex-direction: column; justify-content: space-between; align-items: center; padding: 6px 0; color: #8a9696; background: #d8dde6; border-top: 1px solid #a6abb3; }
.ghost svg { width: 9px; height: 6px; }

/* status bar */
.status { flex: none; height: 22px; display: flex; align-items: center; border-top: 1px solid #8b929b; background: linear-gradient(#e4e7eb, #b5babf); color: #333; line-height: 20px; }
.items { width: 78px; padding-left: 8px; border-right: 1px solid #888e96; }
.sync { margin: 0 17px 0 auto; }
.conn { margin: 0 10px 0 5px; padding-right: 5px; border-right: 1px solid #a5aab0; margin-right: 4px; }
.vw { width: 20px; height: 18px; display: grid; place-items: center; }
.vw.on { border: 1px solid #b8860c; border-radius: 2px; background: #fbd35c; }
.conn { padding-right: 11px; }
.status label { margin: 0 7px; }
.status input { -webkit-appearance: none; appearance: none; width: 100px; height: 14px; margin: 0; background: linear-gradient(#7a8088, #7a8088) center / 100% 1px no-repeat; }
.status input::-webkit-slider-thumb { -webkit-appearance: none; width: 9px; height: 13px; background: #f6f6f7; border: 1px solid #70767e; border-radius: 1px 1px 4px 4px; }
.status svg:last-child { margin-right: 4px; }

/* taskbar */
.taskbar { position: relative; z-index: 0; flex: none; height: 40px; display: flex; align-items: center; gap: 3px; padding-left: 8px; }
.start { width: 38px; margin-right: 10px; }
.tb { width: 59px; height: 38px; margin-top: 1px; display: grid; place-items: center; border: 1px solid #17394f; border-radius: 3px; box-shadow: inset 0 0 0 1px #ffffff80; background: linear-gradient(135deg, #ffffff90, #ffffff30 60%, #ffffff50); }
.tb.flat { border-color: transparent; box-shadow: none; background: none; }
.tb.lit { background: linear-gradient(135deg, #ffffffd0, #ffffff90); }
.tb.stacked { width: 54px; margin-right: 5px; box-shadow: inset 0 0 0 1px #ffffff80, 2px 0 #7db4d4, 3px 0 #17394f, 5px 0 #7db4d4; }
.com { font: 700 9px Lato, sans-serif; fill: #2f4450; }
.tray { margin-left: auto; display: flex; align-items: center; gap: 9px; color: #fff; }
.clock { width: 76px; text-align: center; line-height: 17px; }
.desk { width: 14px; height: 38px; border: 1px solid #6f93b4; background: #173a62; }
```
